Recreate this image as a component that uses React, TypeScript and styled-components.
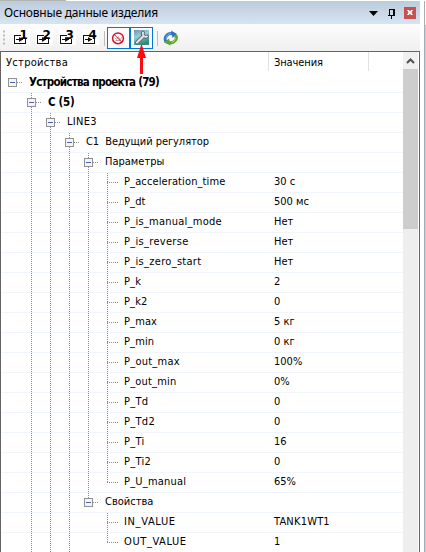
import React from "react";
import styled, { createGlobalStyle } from "styled-components";

const Global = createGlobalStyle`
  * { box-sizing: border-box; }
  body { margin: 0; background: #fff; overflow: hidden; font: 11px "DejaVu Sans Condensed", "DejaVu Sans", sans-serif; color: #000; }
`;

const Screen = styled.div`
  display: flex;
  width: 426px;
  height: 552px;
  overflow: hidden;
  background: #fff;
`;
const Panel = styled.div`
  width: 420px;
  display: flex;
  flex-direction: column;
`;
const TopStrip = styled.div`
  height: 1px;
  flex: none;
  width: 66px;
  background: #b4b4b4;
`;
const TitleBar = styled.div`
  height: 23px;
  flex: none;
  display: flex;
  align-items: center;
  padding: 0 4px;
  background: linear-gradient(#bccbda, #d7e4f2);
`;
const Label = styled.span<{ $spacing?: number; $bold?: boolean }>`
  white-space: pre;
  font-size: ${(p) => (p.$bold ? 11.5 : 11)}px;
  font-weight: ${(p) => (p.$bold ? 700 : 400)};
  line-height: ${(p) => (p.$bold ? 18 : 17)}px;
  letter-spacing: ${(p) => p.$spacing ?? 0}px;
`;
const Title = styled.div`
  flex: 1;
  font: 12px/22px "Noto Sans", sans-serif;
  letter-spacing: -0.2px;
  white-space: nowrap;
`;
const TitleButtons = styled.svg`
  width: 50px;
  height: 23px;
  flex: none;
`;
const Toolbar = styled.div`
  height: 27px;
  flex: none;
  display: flex;
  background: linear-gradient(#fcfcfc, #f0f0f0);
`;
const ToolIcons = styled.svg`
  width: 190px;
  height: 58px;
  flex: none;
  position: relative;
  z-index: 2;
`;
const Frame = styled.div`
  flex: 1;
  min-height: 0;
  display: flex;
  border: solid #646464;
  border-width: 1px 1px 0 1px;
  background: #fff;
`;
const Tree = styled.div`
  width: 402px;
  flex: none;
`;
const Header = styled.div`
  height: 21px;
  display: grid;
  grid-template-columns: 268px 100px 1fr;
`;
const HeaderCell = styled.div<{ $spacing?: number }>`
  height: 19px;
  border-right: 1px solid #e2e2e2;
  padding-left: 5px;
  line-height: 21px;
  letter-spacing: ${(p) => p.$spacing ?? 0}px;
  &:last-child { border-right: 0; }
`;
const Row = styled.div`
  height: 20px;
  display: grid;
  grid-template-columns: 268px 1fr;
  border-bottom: 1px solid #f0f4fb;
`;
const NameCell = styled.div`
  display: flex;
  height: 20px;
`;
const Guides = styled.svg<{ $w: number }>`
  width: ${(p) => p.$w}px;
  height: 20px;
  flex: none;
`;
const ValueCell = styled.div`
  display: flex;
  padding-left: 5px;
`;
const ScrollBar = styled.div`
  width: 15px;
  background: #eee;
`;
const ScrollArrow = styled.svg`
  display: block;
  width: 15px;
  height: 17px;
  background: #f0f0f0;
`;
const Thumb = styled.div`
  height: 160px;
  background: #cdcdcd;
`;
const Neighbour = styled.div`
  width: 2px;
  margin: 1px 0 0 4px;
  border-left: 1px solid #a9abae;
  background: linear-gradient(#fff 24px, #bdd2e8 24px);
`;

type Item = {
  level: number;
  text: string;
  value?: string;
  leaf?: boolean;
  bold?: boolean;
  last?: boolean;
  spacing?: number;
};
const leaf = (text: string, value: string, last = false, spacing = 0.12): Item => ({
  level: 5, text, value, leaf: true, last, spacing,
});
const items: Item[] = [
  { level: 0, text: "Устройства проекта (79)", bold: true, last: true, spacing: -0.75 },
  { level: 1, text: "C (5)", bold: true, spacing: -0.3 },
  { level: 2, text: "LINE3", spacing: 0.3 },
  { level: 3, text: "C1  Ведущий регулятор", spacing: -0.06 },
  { level: 4, text: "Параметры" },
  leaf("P_acceleration_time", "30 с"),
  leaf("P_dt", "500 мс"),
  leaf("P_is_manual_mode", "Нет", false, 0.25),
  leaf("P_is_reverse", "Нет", false, 0.3),
  leaf("P_is_zero_start", "Нет", false, 0.3),
  leaf("P_k", "2"),
  leaf("P_k2", "0"),
  leaf("P_max", "5 кг"),
  leaf("P_min", "0 кг"),
  leaf("P_out_max", "100%", false, 0.25),
  leaf("P_out_min", "0%", false, 0.2),
  leaf("P_Td", "0", false, 0.3),
  leaf("P_Td2", "0", false, 0.3),
  leaf("P_Ti", "16", false, 0.3),
  leaf("P_Ti2", "0", false, 0.3),
  leaf("P_U_manual", "65%", true, 0.2),
  { level: 4, text: "Свойства", last: true },
  leaf("IN_VALUE", "TANK1WT1", false, 0.65),
  leaf("OUT_VALUE", "1", true, 0.6),
];

function TreeRow({ item, index }: { item: Item; index: number }) {
  const { level } = item;
  const cx = 11 + level * 19;
  const afterProps = index > 21;
  const lines: [number, number][] = [];
  for (let l = 1; l < level; l++) {
    if (l === 4 && afterProps) continue;
    lines.push([11 + l * 19, 20]);
  }
  if (level > 0) lines.push([cx, item.last ? 10 : 20]);
  return (
    <Row>
      <NameCell>
        <Guides $w={item.leaf ? 123 : 28 + level * 19}>
          <g stroke="#8c8c8c" strokeDasharray="1 1" shapeRendering="crispEdges">
            {lines.map(([x, h]) => (
              <path key={x} d={`M${x + 0.5} 0V${h}`} />
            ))}
            <path d={item.leaf ? `M${cx} 9.5h12` : `M${cx + 5} 9.5h6`} />
          </g>
          {!item.leaf && (
            <g shapeRendering="crispEdges">
              <rect x={cx - 3.5} y="5.5" width="8" height="8" fill="#f4f4f4" stroke="#919191" />
              <path d={`M${cx - 2} 9.5h5`} stroke="#4b63a7" />
            </g>
          )}
        </Guides>
        <Label $bold={item.bold} $spacing={item.spacing}>{item.text}</Label>
      </NameCell>
      <ValueCell>
        <Label $spacing={item.value === "TANK1WT1" ? 0.2 : 0}>{item.value}</Label>
      </ValueCell>
    </Row>
  );
}

function StepIcon({ x, n }: { x: number; n: number }) {
  return (
    <g transform={`translate(${x} 6)`}>
      <rect x="-1" y="-1" width="17" height="16" fill="#fff" />
      <g shapeRendering="crispEdges" fill="none" stroke="#111">
        <path d="M7 5.500H.5V13.500H11.500V9M2 9.500h7" />
      </g>
      <path d="M5 7l4 2.500-4 2.500z" fill="#111" />
      <text x="5.500" y="9" fontFamily="DejaVu Sans" fontSize="12" fontWeight="700">{n}</text>
    </g>
  );
}

export default function App() {
  return (
    <Screen>
      <Global />
      <Panel>
        <TopStrip />
        <TitleBar>
          <Title>Основные данные изделия</Title>
          <TitleButtons viewBox="0 0 50 23">
            <path d="M3 10h9l-4.500 5z" />
            <g stroke="#000" fill="none" shapeRendering="crispEdges">
              <path d="M23.500 8v6M24 8.500h5M27.500 8v6M28.500 8v6M22 14.500h7M25.500 15v3" />
            </g>
            <rect x="38" y="6" width="12" height="12" fill="#c75050" />
            <path d="M41 9h2l1 1.500 1-1.500h2l-1.500 2.500L47 14h-2l-1-1.500-1 1.500h-2l1.500-2.500z" fill="#fff" />
          </TitleButtons>
        </TitleBar>
        <Toolbar>
          <ToolIcons viewBox="0 0 190 58">
            <defs>
              <linearGradient id="tile" x1="0" y1="0" x2="0.4" y2="1">
                <stop offset="0" stopColor="#6f93a8" />
                <stop offset="0.45" stopColor="#9dc9dc" />
                <stop offset="1" stopColor="#2f8c7c" />
              </linearGradient>
            </defs>
            <path d="M4 6.500v14" stroke="#bcbcbc" strokeWidth="2" strokeDasharray="2 2" />
            {[14, 37, 60, 83].map((x, i) => (
              <StepIcon key={x} x={x} n={i + 1} />
            ))}
            <path d="M104.500 7v15M157.500 7v15" stroke="#bdbdbd" />
            <rect x="107.500" y="3.500" width="22" height="21" fill="#fafafa" stroke="#0078d7" />
            <rect x="130.500" y="3.500" width="22" height="21" fill="#fafafa" stroke="#0078d7" />
            <circle cx="118" cy="14.300" r="5.400" fill="#fff" stroke="#dd1026" strokeWidth="1.500" />
            <path d="M114.500 13.500l2 2 2-3 1.500 3.500 2-3M115.500 16.500h5" fill="none" stroke="#a3908c" strokeWidth=".8" />
            <path d="M114.200 10.500l7.600 7.600" stroke="#dd1026" strokeWidth="1" />
            <rect x="134" y="6" width="15" height="15" fill="url(#tile)" />
            <g stroke="#4c5557" strokeWidth="3.600" strokeLinecap="round" fill="none">
              <path d="M137 18.500l6-6M143 8.500a3 3 0 0 0 4 4" />
            </g>
            <g stroke="#e4e6e6" strokeLinecap="round" fill="none">
              <path d="M137 18.500l6-6" strokeWidth="2.300" />
              <path d="M143 8.500a3 3 0 0 0 4 4" strokeWidth="2" />
            </g>
            <path d="M165.800 17.500a5.600 5.600 0 0 1 7-7.600" stroke="#2f73c4" strokeWidth="3" fill="none" />
            <path d="M166.300 15.500a5 5 0 0 1 4.500-6" stroke="#86bdf0" strokeWidth="1" fill="none" />
            <path d="M171 6.500l6 3.500-4.500 4z" fill="#2f73c4" />
            <path d="M175.800 11a5.600 5.600 0 0 1-7 7.500" stroke="#57a82a" strokeWidth="3" fill="none" />
            <path d="M175.500 14a5 5 0 0 1-4 4.500" stroke="#a9dc68" strokeWidth="1" fill="none" />
            <path d="M170.500 21.500l-6.500-3 5-4z" fill="#57a82a" />
            <path d="M141.500 32v18" stroke="#fb0b12" strokeWidth="3" />
            <path d="M137 34l4.500-14.500L146 34z" fill="#fb0b12" />
          </ToolIcons>
        </Toolbar>
        <Frame>
          <Tree>
            <Header>
              <HeaderCell $spacing={0.3}>Устройства</HeaderCell>
              <HeaderCell $spacing={-0.1}>Значения</HeaderCell>
              <HeaderCell />
            </Header>
            {items.map((item, i) => (
              <TreeRow key={item.text} item={item} index={i} />
            ))}
          </Tree>
          <ScrollBar>
            <ScrollArrow viewBox="0 0 15 17">
              <path d="M4 11l3.500-3.500L11 11" fill="none" stroke="#505050" strokeWidth="2" />
            </ScrollArrow>
            <Thumb />
          </ScrollBar>
        </Frame>
      </Panel>
      <Neighbour />
    </Screen>
  );
}
